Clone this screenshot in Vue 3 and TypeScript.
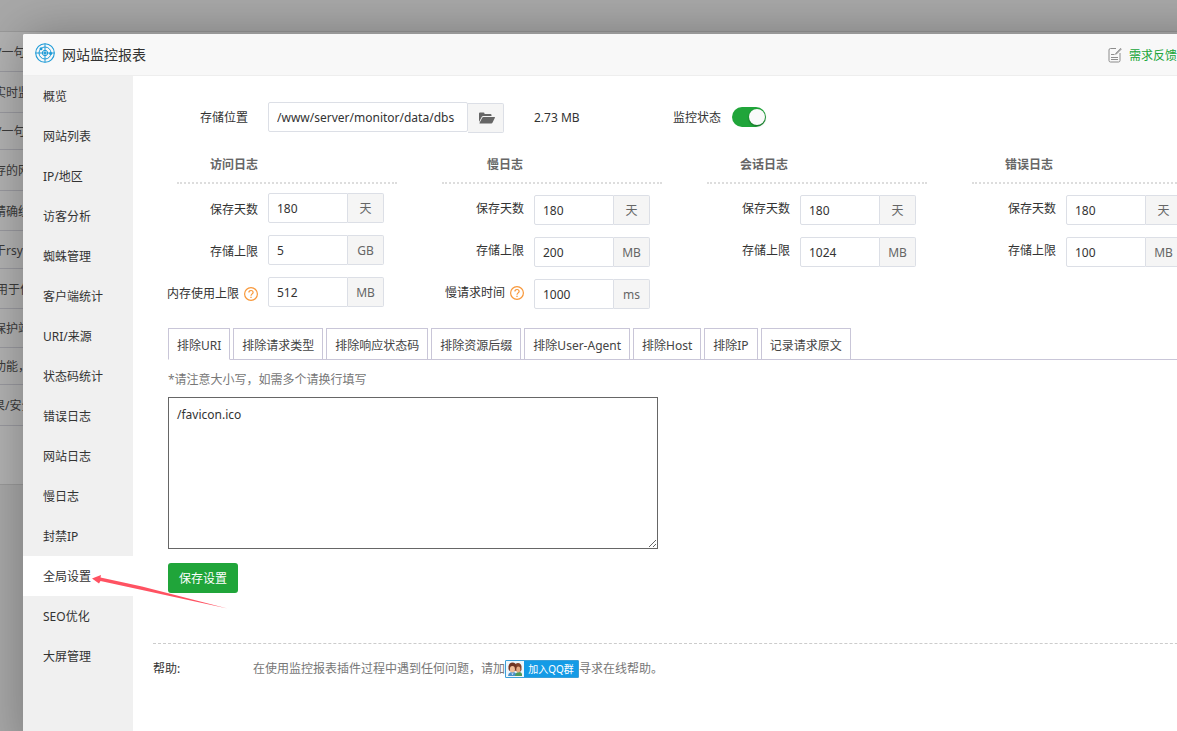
<script setup lang="ts">
import { ref } from 'vue'

interface Field {
  id: string
  label: string
  value: string
  unit: string
  help?: boolean
}
interface LogGroup {
  title: string
  fields: Field[]
}

const backgroundRows = [
  { text: '/一句', height: 40, indent: -3 },
  { text: '实时监', height: 41, indent: -6 },
  { text: '/一句', height: 37, indent: -3 },
  { text: '存的网', height: 41, indent: -6 },
  { text: '精确统', height: 40, indent: -6 },
  { text: '于rsy', height: 38, indent: -6 },
  { text: '用于作', height: 40, indent: -4 },
  { text: '保护站', height: 39, indent: -6 },
  { text: '功能，', height: 37, indent: -6 },
  { text: '果/安全', height: 41, indent: -7 },
]

const menu = [
  '概览', '网站列表', 'IP/地区', '访客分析', '蜘蛛管理', '客户端统计', 'URI/来源', '状态码统计',
  '错误日志', '网站日志', '慢日志', '封禁IP', '全局设置', 'SEO优化', '大屏管理',
]
const activeMenu = ref('全局设置')

const tabs = [
  '排除URI', '排除请求类型', '排除响应状态码', '排除资源后缀',
  '排除User-Agent', '排除Host', '排除IP', '记录请求原文',
]
const activeTab = ref('排除URI')

const groups = ref<LogGroup[]>([
  {
    title: '访问日志',
    fields: [
      { id: 'access-days', label: '保存天数', value: '180', unit: '天' },
      { id: 'access-size', label: '存储上限', value: '5', unit: 'GB' },
      { id: 'access-memory', label: '内存使用上限', value: '512', unit: 'MB', help: true },
    ],
  },
  {
    title: '慢日志',
    fields: [
      { id: 'slow-days', label: '保存天数', value: '180', unit: '天' },
      { id: 'slow-size', label: '存储上限', value: '200', unit: 'MB' },
      { id: 'slow-time', label: '慢请求时间', value: '1000', unit: 'ms', help: true },
    ],
  },
  {
    title: '会话日志',
    fields: [
      { id: 'session-days', label: '保存天数', value: '180', unit: '天' },
      { id: 'session-size', label: '存储上限', value: '1024', unit: 'MB' },
    ],
  },
  {
    title: '错误日志',
    fields: [
      { id: 'error-days', label: '保存天数', value: '180', unit: '天' },
      { id: 'error-size', label: '存储上限', value: '100', unit: 'MB' },
    ],
  },
])

const storagePath = ref('/www/server/monitor/data/dbs')
const monitoring = ref(true)
const excluded = ref('/favicon.ico')
</script>

<template>
  <div class="page">
    <div class="backdrop-list">
      <div
        v-for="(row, i) in backgroundRows"
        :key="i"
        class="backdrop-row"
        :style="{ height: row.height + 'px', textIndent: row.indent + 'px' }"
      >{{ row.text }}</div>
    </div>
    <div class="shade"></div>

    <section class="dialog">
      <header class="dialog-head">
        <svg class="logo" viewBox="0 0 20 20" width="20" height="20" fill="none" stroke="#1e9bd7">
          <circle cx="10" cy="10" r="9.3" stroke-width="1.1" />
          <circle cx="10" cy="10" r="6" stroke-width="1" />
          <circle cx="10" cy="10" r="2.7" stroke-width="1" />
          <path d="M10 .7v18.6M.7 10h18.6" stroke-width="1" />
          <circle cx="10" cy="10" r="1" fill="#1e9bd7" stroke="none" />
          <circle cx="6" cy="5.8" r="1.5" fill="#1e9bd7" stroke="none" />
          <circle cx="15.6" cy="10.4" r="1.5" fill="#1e9bd7" stroke="none" />
        </svg>
        <h1>网站监控报表</h1>
        <a class="feedback" href="#">
          <svg viewBox="0 0 14 16" width="14" height="16" fill="none" stroke="#8c8c8c">
            <path d="M8 1.5H2.5a1.5 1.5 0 0 0-1.5 1.5v10.5A1.5 1.5 0 0 0 2.5 15h8a1.5 1.5 0 0 0 1.5-1.5V6" />
            <path d="M3 7.5h3.5M3 10.5h7M3 12.5h7" />
            <path d="M12.6 1.3 8 6l-.6 1.3L8.8 6.800l4.500-4.600z" fill="#aaa" stroke-width=".7" />
          </svg>
          <span>需求反馈</span>
        </a>
      </header>

      <div class="dialog-body">
        <nav class="menu">
          <a
            v-for="item in menu"
            :key="item"
            href="#"
            :class="{ active: item === activeMenu }"
            @click.prevent="activeMenu = item"
          >{{ item }}</a>
        </nav>

        <main class="content">
          <div class="storage">
            <label class="storage-label" for="storage-path">存储位置</label>
            <input id="storage-path" v-model="storagePath" class="path" type="text" />
            <button class="browse" type="button" aria-label="选择目录">
              <svg viewBox="0 0 16 12" width="16" height="12" fill="#666">
                <path d="M0 10V1.500Q0 .5 1 .5h3.500q1 0 1 1V2H11.500q1 0 1 1v1H4.200q-1 0-1.400.8z" />
                <path d="M4.500 5H15.500q.7 0 .4.7L13.600 10.600q-.4.9-1.400.9H1q-.8 0-.4-.8L3.200 5.800Q3.600 5 4.500 5z" />
              </svg>
            </button>
            <span class="used">2.73 MB</span>
            <label class="status" for="monitoring">监控状态</label>
            <input id="monitoring" v-model="monitoring" class="switch" type="checkbox" role="switch" />
          </div>

          <div class="titles">
            <h2 v-for="group in groups" :key="group.title"><span>{{ group.title }}</span></h2>
          </div>
          <div class="groups">
            <div v-for="group in groups" :key="group.title" class="group">
              <div v-for="field in group.fields" :key="field.id" class="field">
                <label :for="field.id">
                  {{ field.label }}
                  <svg v-if="field.help" viewBox="0 0 14 14" width="14" height="14" fill="none" stroke="#f8983a">
                    <circle cx="7" cy="7" r="6.400" stroke-width="1.200" />
                    <path d="M4.900 5.600C4.900 4.200 5.800 3.500 7 3.500s2.100.8 2.100 1.900C9.100 6.800 7 7 7 8.700" stroke-width="1.200" />
                    <path d="M7 9.800v1.200" stroke-width="1.300" />
                  </svg>
                </label>
                <input :id="field.id" v-model="field.value" type="text" />
                <span class="unit">{{ field.unit }}</span>
              </div>
            </div>
          </div>

          <div class="tabs" role="tablist">
            <button
              v-for="tab in tabs"
              :key="tab"
              type="button"
              role="tab"
              :aria-selected="tab === activeTab"
              :class="{ active: tab === activeTab }"
              @click="activeTab = tab"
            >{{ tab }}</button>
          </div>
          <div class="panel">
            <label class="hint" for="excluded">*请注意大小写，如需多个请换行填写</label>
            <textarea id="excluded" v-model="excluded" spellcheck="false"></textarea>
            <button class="save" type="button">保存设置</button>
          </div>

          <footer class="help">
            <span class="help-title">帮助:</span>
            <p>
              <span>在使用监控报表插件过程中遇到任何问题，请加</span>
              <a class="qq" href="#">
                <svg viewBox="0 0 18 16" width="18" height="16">
                  <rect width="18" height="16" fill="#eef6fb" />
                  <path d="M2 15q.5-4 4.500-4t4.500 4z" fill="#4a90c8" />
                  <path d="M9 15q.5-4 4-4t3 4z" fill="#4f9a5b" />
                  <path d="M8.500 8V5.500Q9 2 12 2t3.500 3.500V9q-.5 2-3 2t-4-3z" fill="#83442c" />
                  <path d="M2.500 8V5.500Q3 1.500 6.500 1.500t4 4V8q-.5 2.500-4 2.500t-4-2.500z" fill="#6f3524" />
                  <ellipse cx="6.400" cy="8.200" rx="2.500" ry="3.200" fill="#f0bd98" />
                  <ellipse cx="12.300" cy="8.400" rx="2" ry="3" fill="#e6ab84" />
                  <path d="M5.400 12.500l1.100 1.500 1.100-1.500z" fill="#fff" />
                </svg>
                <span>加入QQ群</span>
              </a>
              <span>寻求在线帮助。</span>
            </p>
          </footer>
        </main>
      </div>
    </section>

    <svg class="arrow" viewBox="0 0 136 38" width="136" height="38" aria-hidden="true">
      <path d="M0 6.500 9 3 8.500 5.500 50 14.500 135.500 36.500 50 18 8.500 9 7 11.500z" fill="#ff5262" />
    </svg>
  </div>
</template>

<style>
body {
  margin: 0;
}
</style>

<style scoped>
.page {
  position: relative;
  min-height: 100vh;
  overflow: hidden;
  background: #f1f1f1;
  color: #333;
  font: 12px/20px "Noto Sans", "Noto Sans CJK SC", sans-serif;
}
.page * {
  box-sizing: border-box;
}
input,
button,
textarea {
  margin: 0;
  font: inherit;
  color: inherit;
}
a {
  color: inherit;
  text-decoration: none;
}

.backdrop-list {
  margin-top: 31px;
  padding-bottom: 58px;
  background: #fff;
  border-top: 1px solid #ddd;
  border-bottom: 1px solid #ddd;
  color: #555;
}
.backdrop-row {
  display: flex;
  align-items: center;
  padding-top: 2px;
  border-bottom: 1px solid #dcdce4;
  white-space: nowrap;
}
.shade {
  position: absolute;
  inset: 0;
  background: rgba(0, 0, 0, 0.3);
}

.dialog {
  position: absolute;
  top: 34px;
  left: 23px;
  right: -51px;
  bottom: -20px;
  display: flex;
  flex-direction: column;
  background: #fff;
  border-radius: 2px;
  box-shadow: 1px 1px 50px rgba(0, 0, 0, 0.3);
}
.dialog-head {
  display: flex;
  align-items: center;
  height: 42px;
  padding: 0 51px 0 12px;
  background: #f8f8f8;
  border-bottom: 1px solid #eee;
  border-radius: 2px 2px 0 0;
}
.logo {
  margin-bottom: 4px;
}
.dialog-head h1 {
  flex: 1;
  margin: 0 0 0 7px;
  font-size: 14px;
  font-weight: 400;
}
.feedback {
  display: flex;
  align-items: center;
  gap: 7px;
  color: #20a53a;
}
.feedback span {
  padding-top: 2px;
}
.dialog-body {
  flex: 1;
  display: flex;
  min-height: 0;
}
.menu {
  flex: none;
  width: 110px;
  background: #f0f0f0;
}
.menu a {
  display: block;
  height: 40px;
  padding-left: 20px;
  line-height: 42px;
}
.menu .active {
  background: #fff;
}

.content {
  flex: 1;
  min-width: 0;
  padding: 25px 0 0 20px;
}
.storage {
  display: flex;
  align-items: center;
  height: 32px;
}
.storage-label,
.used,
.status {
  padding-top: 2px;
}
.storage-label {
  width: 95px;
  margin-right: 20px;
  text-align: right;
}
.path {
  width: 200px;
  height: 30px;
  padding: 0 8px;
  border: 1px solid #dcdfe6;
  border-radius: 2px;
}
.browse {
  display: flex;
  align-items: center;
  justify-content: center;
  width: 36px;
  height: 30px;
  margin-top: 2px;
  padding: 0 0 0 2px;
  background: #f5f5f5;
  border: 1px solid #dcdfe6;
  border-left: 0;
  border-radius: 0 2px 2px 0;
}
.used {
  width: 139px;
  margin-left: 30px;
}
.status {
  margin-right: 11px;
}
.switch {
  appearance: none;
  display: flex;
  justify-content: flex-end;
  align-items: center;
  width: 34px;
  height: 20px;
  padding: 0 1px;
  background: #bbb;
  border-radius: 10px;
}
.switch::before {
  content: "";
  width: 16px;
  height: 16px;
  background: #fafafa;
  border-radius: 50%;
  box-shadow: 0 1px 2px rgba(0, 0, 0, 0.4);
}
.switch:not(:checked) {
  justify-content: flex-start;
}
.switch:checked {
  background: #20a53a;
}

.titles {
  display: grid;
  grid-template-columns: repeat(4, 265px);
  margin: 21px 0 0 24px;
}
.titles h2 {
  width: 220px;
  height: 30px;
  margin: 0;
  border-bottom: 2px dotted #ddd;
  color: #666;
  font-size: 12px;
  font-weight: 600;
}
.titles span {
  display: block;
  width: 81px;
  padding-top: 1px;
  text-align: right;
}
.groups {
  display: grid;
  grid-template-columns: repeat(4, 266px);
  margin: 9px 0 0 5px;
}
.group {
  display: flex;
  flex-direction: column;
  gap: 12px;
}
.group + .group {
  padding-top: 2px;
}
.field {
  display: flex;
  align-items: center;
}
.field label {
  display: flex;
  align-items: center;
  justify-content: flex-end;
  gap: 5px;
  width: 100px;
  margin-right: 10px;
  padding-top: 3px;
}
.group + .group label {
  padding: 0 0 2px;
}
.field input {
  width: 80px;
  height: 30px;
  padding: 0 8px;
  border: 1px solid #dcdfe6;
  border-radius: 2px 0 0 2px;
}
.unit {
  width: 36px;
  height: 30px;
  background: #f5f5f5;
  border: 1px solid #dcdfe6;
  border-left: 0;
  border-radius: 0 2px 2px 0;
  color: #666;
  line-height: 30px;
  text-align: center;
}

.tabs {
  display: flex;
  gap: 3px;
  margin: 19px 0 0 15px;
  border-bottom: 1px solid #c9c6d8;
}
.tabs button {
  height: 32px;
  margin-bottom: -1px;
  padding: 3px 8px 0;
  background: #fff;
  border: 1px solid #c9c6d8;
  color: #444;
  white-space: nowrap;
}
.tabs .active {
  border-bottom-color: #fff;
}
.panel {
  display: flex;
  flex-direction: column;
  align-items: flex-start;
  padding: 10px 0 50px 15px;
}
.hint {
  color: #777;
}
textarea {
  width: 490px;
  height: 152px;
  margin: 7px 0 14px;
  padding: 7px 8px;
  background: #fff;
  border: 1px solid #666;
  border-radius: 0;
}
.save {
  width: 70px;
  height: 30px;
  padding: 2px 0 0;
  background: #20a53a;
  border: 0;
  border-radius: 3px;
  color: #fff;
}
.help {
  display: flex;
  padding-top: 15px;
  border-top: 1px dashed #ccc;
}
.help-title {
  width: 100px;
}
.help p {
  display: flex;
  margin: 0;
  color: #777;
}
.qq {
  display: flex;
  align-items: center;
  width: 74px;
  height: 18px;
  margin-top: 1px;
  background: #149be6;
  border: 1px solid #3b9fd8;
  border-radius: 1px;
  color: #fff;
  font-size: 10px;
}
.qq span {
  flex: 1;
  text-align: center;
}

.arrow {
  position: absolute;
  top: 572px;
  left: 92px;
  pointer-events: none;
}
</style>
